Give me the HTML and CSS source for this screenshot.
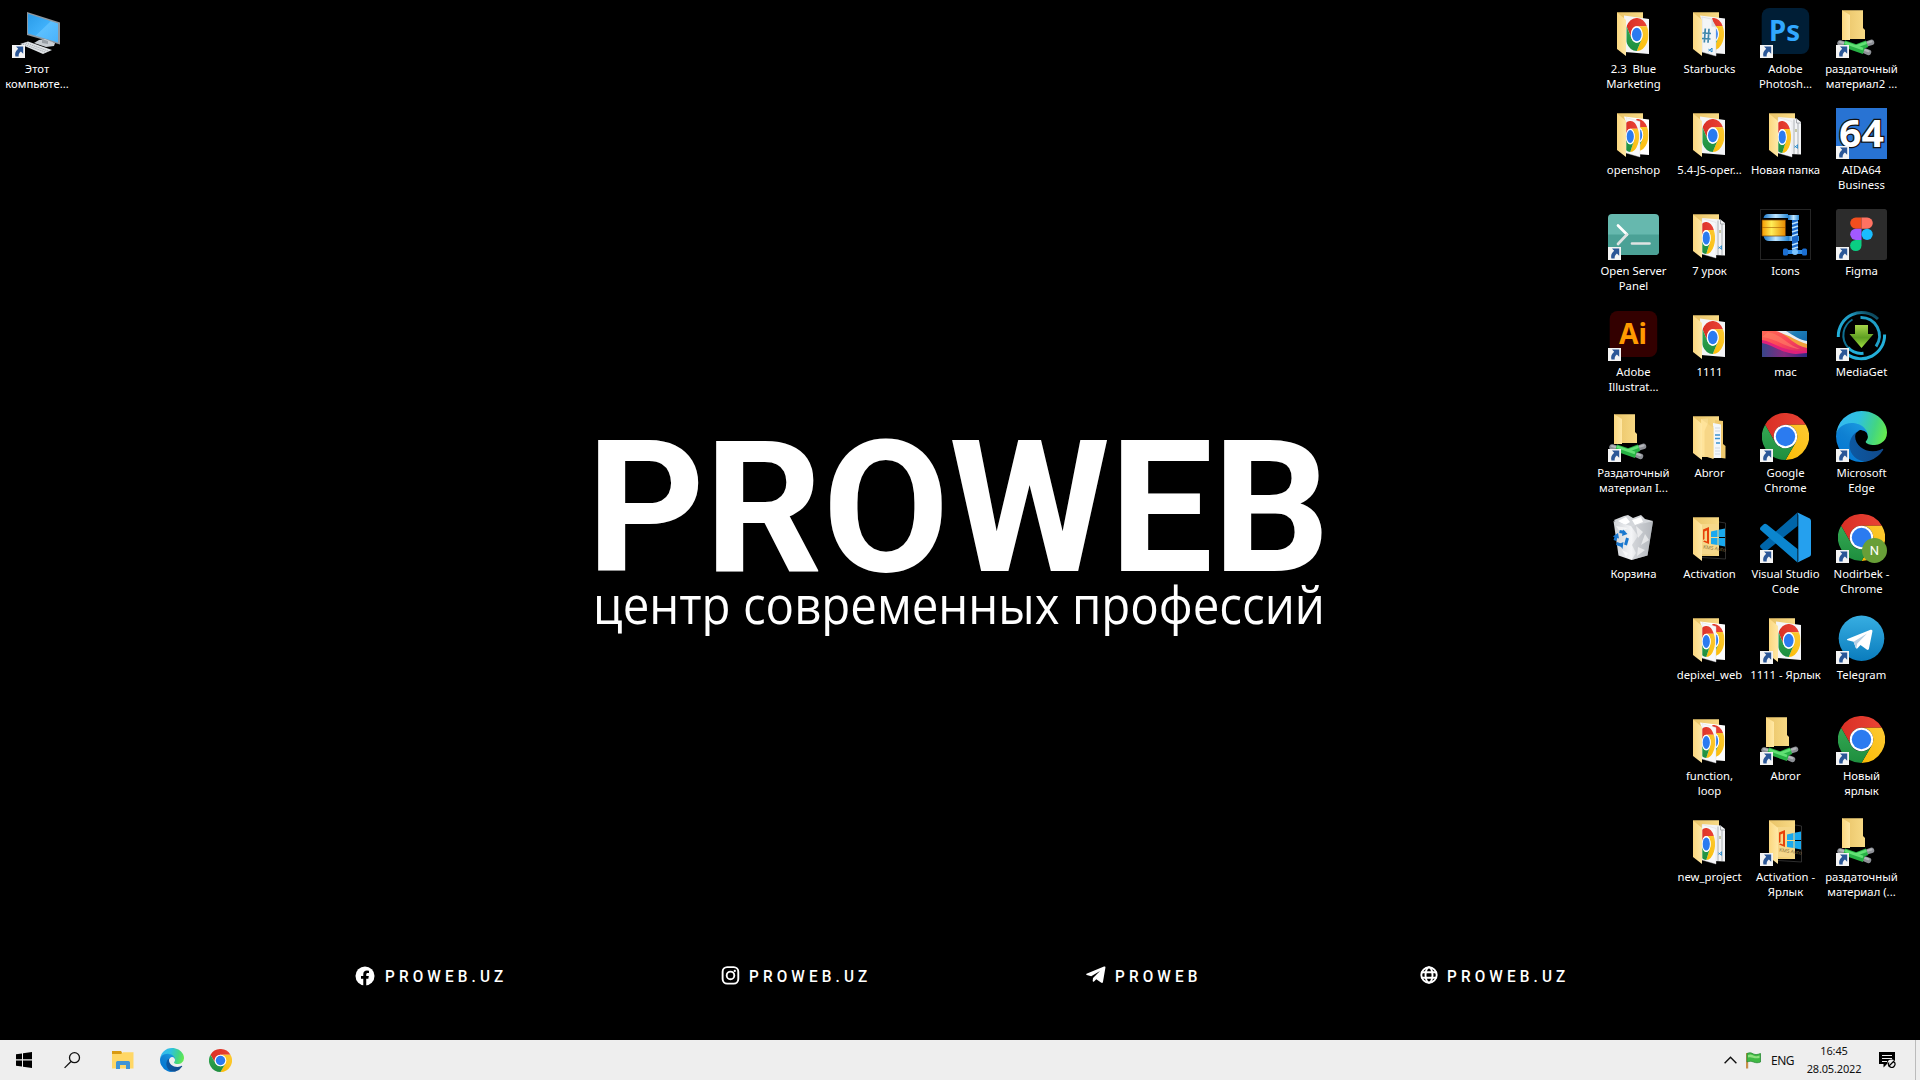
FILE: index.html
```html
<!DOCTYPE html>
<html lang="ru">
<head>
<meta charset="utf-8">
<title>PROWEB</title>
<link rel="stylesheet" href="styles.css">
</head>
<body>
<svg class="defs" width="0" height="0">
  <defs>
    <linearGradient id="fBack" x1="0" y1="0" x2="1" y2="0"><stop offset="0" stop-color="#e9c367"/><stop offset="1" stop-color="#f8da86"/></linearGradient>
    <linearGradient id="fFlap" x1="0" y1="0" x2="1" y2="0"><stop offset="0" stop-color="#fbd77f"/><stop offset="1" stop-color="#ffe8a6"/></linearGradient>
    <linearGradient id="cRed" x1="0" y1="0" x2="1" y2="0"><stop offset="0" stop-color="#d93025"/><stop offset="1" stop-color="#ea4335"/></linearGradient>
    <linearGradient id="cGreen" x1="0" y1="0" x2="0" y2="1"><stop offset="0" stop-color="#34a853"/><stop offset="1" stop-color="#1e8e3e"/></linearGradient>
    <linearGradient id="cYellow" x1="0" y1="1" x2="1" y2="0"><stop offset="0" stop-color="#fbbc04"/><stop offset="1" stop-color="#fcc934"/></linearGradient>
    <linearGradient id="e1" x1="0" y1="0" x2="1" y2="0"><stop offset="0" stop-color="#0c59a4"/><stop offset="1" stop-color="#114a8b"/></linearGradient>
    <linearGradient id="e2" x1=".8" y1="0" x2=".2" y2="1"><stop offset="0" stop-color="#1b9de2"/><stop offset=".5" stop-color="#0f80d2"/><stop offset="1" stop-color="#0078d4"/></linearGradient>
    <linearGradient id="e3" x1="0" y1=".4" x2="1" y2=".6"><stop offset="0" stop-color="#35b8f1"/><stop offset=".4" stop-color="#2fc2df"/><stop offset=".75" stop-color="#43d582"/><stop offset="1" stop-color="#66eb4e"/></linearGradient>
    <linearGradient id="tg" x1="0" y1="0" x2="0" y2="1"><stop offset="0" stop-color="#37aee2"/><stop offset="1" stop-color="#0a7cbd"/></linearGradient>
    <linearGradient id="mgArrow" x1="0" y1="0" x2="0" y2="1"><stop offset="0" stop-color="#a6d54a"/><stop offset=".55" stop-color="#5f9f22"/><stop offset="1" stop-color="#a0e040"/></linearGradient>
    <linearGradient id="mgRing" x1="0" y1="1" x2="1" y2="0"><stop offset="0" stop-color="#23b5e0"/><stop offset=".6" stop-color="#1f9ac2"/><stop offset="1" stop-color="#062c3a"/></linearGradient>
    <linearGradient id="screen" x1="0" y1="0" x2="1" y2="1"><stop offset="0" stop-color="#2a9be8"/><stop offset=".5" stop-color="#3fb0fa"/><stop offset=".52" stop-color="#5cc0ff"/><stop offset="1" stop-color="#49b2fb"/></linearGradient>
    <linearGradient id="gold" x1="0" y1="0" x2="1" y2="0"><stop offset="0" stop-color="#f59a00"/><stop offset=".4" stop-color="#ffee58"/><stop offset="1" stop-color="#e88a00"/></linearGradient>
    <linearGradient id="steel" x1="0" y1="0" x2="1" y2="0"><stop offset="0" stop-color="#1d78c8"/><stop offset=".5" stop-color="#bfe6ff"/><stop offset="1" stop-color="#2b8ad6"/></linearGradient>
    <linearGradient id="bin" x1="0" y1="0" x2="1" y2="0"><stop offset="0" stop-color="#cfd2d6"/><stop offset=".45" stop-color="#f4f5f7"/><stop offset="1" stop-color="#a9adb2"/></linearGradient>
    <linearGradient id="sky" x1="0" y1="0" x2="1" y2="1"><stop offset="0" stop-color="#f9b9a8"/><stop offset=".4" stop-color="#1d7fb8"/><stop offset="1" stop-color="#0a4f9a"/></linearGradient>
    <linearGradient id="wave" x1="0" y1="0" x2="1" y2="1"><stop offset="0" stop-color="#ff6a55"/><stop offset=".5" stop-color="#fa4658"/><stop offset="1" stop-color="#d8246c"/></linearGradient>
    <linearGradient id="wave2" x1="0" y1="0" x2="1" y2="0"><stop offset="0" stop-color="#37458a"/><stop offset=".5" stop-color="#8a2a80"/><stop offset="1" stop-color="#2a2a80"/></linearGradient>
    <clipPath id="cpSingle"><path d="M18.5 9 41 12V47L18.5 44z"/></clipPath>
    <clipPath id="cpFront"><path d="M18.3 9 32 13V49L18.3 45z"/></clipPath>
    <clipPath id="cpBack"><path d="M28 9 41 12V47L32 46z"/></clipPath>
    <clipPath id="cpMac"><path d="M2 21h45v26H2z"/></clipPath>
  </defs>

  <symbol id="chrome" viewBox="0 0 48 48" preserveAspectRatio="none">
    <path fill="url(#cRed)" d="M24 12H44.8A24 24 0 0 0 3.2 12L13.6 30A12 12 0 0 1 24 12z"/>
    <path fill="url(#cYellow)" d="M34.4 30 24 48A24 24 0 0 0 44.8 12H24A12 12 0 0 1 34.4 30z"/>
    <path fill="url(#cGreen)" d="M13.6 30 3.2 12A24 24 0 0 0 24 48L34.4 30A12 12 0 0 1 13.6 30z"/>
    <circle cx="24" cy="24" r="12" fill="#fff"/><circle cx="24" cy="24" r="9.9" fill="#2b7bf0"/>
  </symbol>
  <symbol id="edge" viewBox="0 0 256 256">
    <g transform="translate(-4.6 -4.9)"><path fill="url(#e1)" d="M235.68 195.46a93.73 93.73 0 0 1-10.54 4.71 101.87 101.87 0 0 1-35.9 6.46c-47.32 0-88.54-32.55-88.54-74.32A31.48 31.48 0 0 1 117.13 105c-42.8 1.8-53.8 46.4-53.8 72.53 0 73.88 68.09 81.37 82.76 81.37 7.91 0 19.84-2.3 27-4.56l1.31-.44a128.34 128.34 0 0 0 66.6-52.8 4 4 0 0 0-5.32-5.64z"/></g>
    <path fill="url(#e2)" d="M105.73 241.42A79.2 79.2 0 0 1 83 220.08a80.72 80.72 0 0 1 29.49-120c3.17-1.5 8.41-4.3 15.53-4.08a32.37 32.37 0 0 1 25.69 13 31.88 31.88 0 0 1 6.36 18.66c0-.21 24.46-79.6-80-79.6-43.9 0-80 41.66-80 78.21a130.15 130.15 0 0 0 12.11 56 128 128 0 0 0 156.38 67.11 75.55 75.55 0 0 1-62.78-8z"/>
    <path fill="url(#e3)" d="M152.33 148.86c-.81 1.05-3.3 2.5-3.3 5.66 0 2.61 1.7 5.12 4.72 7.23 14.38 10 41.49 8.68 41.56 8.68a59.56 59.56 0 0 0 30.27-8.35A61.38 61.38 0 0 0 256 109.2c.26-22.41-8-37.31-11.34-43.91C223.46 23.84 177.72 0 128 0A128 128 0 0 0 0 126.2c.48-36.54 36.8-66.05 80-66.05 3.5 0 23.46.34 42 10.07 16.34 8.58 24.9 18.94 30.85 29.21 6.18 10.67 7.28 24.15 7.28 29.52s-2.74 13.33-7.8 19.91z"/>
  </symbol>
  <symbol id="arrow" viewBox="0 0 51 51">
    <path fill="#f4f4f4" d="M0 38h13v13H0z"/>
    <path fill="#2b5797" d="M4 39.6h7.2v7.2L8.9 44.6C7.2 46 6.4 47.6 6.7 49.6H3.4C2.6 46.4 3.6 43.9 6.2 41.8z"/>
  </symbol>
  <symbol id="fback" viewBox="0 0 51 51"><path fill="url(#fBack)" d="M9 5.3h26V44H12z"/></symbol>
  <symbol id="flap" viewBox="0 0 51 51"><path fill="url(#fFlap)" d="M9 5.5 18 13V49L9 42z"/></symbol>
  <symbol id="f-one" viewBox="0 0 51 51">
    <use href="#fback"/><path fill="#f4f5f7" d="M16 8.5 41 12V47L17 45z"/>
    <g clip-path="url(#cpSingle)"><use href="#chrome" x="17" y="11" width="23.5" height="33"/></g>
    <use href="#flap"/>
  </symbol>
  <symbol id="f-two" viewBox="0 0 51 51">
    <use href="#fback"/><path fill="#fff" d="M16 8.5 41 11.5V47L28 46z"/>
    <g clip-path="url(#cpBack)"><use href="#chrome" x="19" y="11" width="21.5" height="32"/></g>
    <path fill="#f7f8fa" stroke="#d5d5d8" stroke-width=".4" d="M18 9.5 32 13.5V49L18 45z"/>
    <g clip-path="url(#cpFront)"><use href="#chrome" x="13.5" y="13" width="17.5" height="31"/></g>
    <use href="#flap"/>
  </symbol>
  <symbol id="vs" viewBox="0 0 10 10"><path fill="none" stroke="#1c86cc" stroke-width="2" d="M8 1v8L1 3.5M1 7 8 1.5"/></symbol>
  <symbol id="f-docs" viewBox="0 0 51 51">
    <use href="#fback"/><path fill="#f3f4f6" d="M18 9 36.5 10.5 41 14V46.5L30 46z"/>
    <path fill="none" stroke="#8e9298" stroke-width=".7" d="M34 11.5V46M36.5 10.5V15L41 15M38 15V46"/>
    <use href="#vs" x="34" y="35" width="4.5" height="7"/><path stroke="#9a9a52" stroke-width="1" d="M36 21v3"/>
    <path fill="#f7f8fa" stroke="#d5d5d8" stroke-width=".4" d="M18 9.5 32 13.5V49L18 45z"/>
    <g clip-path="url(#cpFront)"><use href="#chrome" x="13.5" y="13" width="17.5" height="32"/></g>
    <use href="#flap"/>
  </symbol>
  <symbol id="f-hash" viewBox="0 0 51 51">
    <use href="#fback"/><path fill="#f4f5f7" d="M16 8.5 41 11.5V47L28 46z"/>
    <g clip-path="url(#cpBack)"><use href="#chrome" x="19" y="11" width="21" height="32"/></g>
    <path fill="#f3f5f7" stroke="#c9ccd0" stroke-width=".5" d="M18 10 27.5 12 32 20V49L18 45z"/>
    <path fill="#d9dde2" d="M27.500 12V19.500L32 20z"/>
    <path fill="none" stroke="#3f87ab" stroke-width="1.7" d="M21.3 21.5 20.3 35.5M25 21.8 24 35.800M18.5 26 27 26.5M18 31.5 26.5 32"/>
    <use href="#vs" x="24" y="39" width="5" height="8"/>
    <use href="#flap"/>
  </symbol>
  <symbol id="f-stack" viewBox="0 0 51 51">
    <use href="#fback"/>
    <path fill="#efc96e" d="M31 9 39 10V33L41.5 35V47.5L30 46z"/>
    <path fill="#f3f7fb" d="M29 12 37 13.5V47H29z"/>
    <path fill="none" stroke="#b9c6d4" stroke-width=".6" d="M31 17h5M31 20h5M31 37h5M31 40h5M31 43h5"/>
    <path stroke="#3b93d0" stroke-width="1.4" d="M31 24h5M31 27.5h5M32 32h4"/>
    <path fill="#f6d98c" d="M17 8 24 7.5V46L18 46z"/><path fill="#ffe39a" d="M17 8 29.500 17V48L18 44z"/><path fill="#f3d07c" d="M24 12 29.500 15V47.5L20.5 45.5V20z" opacity=".65"/>
    <use href="#flap"/>
  </symbol>
  <symbol id="f-act" viewBox="0 0 51 51">
    <use href="#fback"/>
    <path fill="none" stroke="#3a3a3a" stroke-width=".8" d="M35 10 41.5 11V47L18 45.5"/>
    <path fill="#f6d88a" d="M17 12h18V38L28.500 42H17z"/>
    <path fill="#e8420a" d="M19 17.5 25 15V32L19 29.5 20.5 28.5 23 29.5V18.5L20.5 19.5V27L19 28z"/>
    <path fill="#19a9ee" d="M27 19.5 33.500 18V25H27zM34.500 17.800 41 16.500V25H34.500zM27 26H33.500V33L27 32zM34.500 26H41V34.500L34.500 33.300z"/>
    <use href="#flap"/>
  </symbol>
  <symbol id="f-net" viewBox="0 0 51 51">
    <path fill="url(#fBack)" d="M6 3.3H27V21L29 23V32H12z"/>
    <path fill="url(#fFlap)" d="M6 3.3 14 8V33H6z"/>
    <path stroke="#8d9096" stroke-width="5.5" stroke-linecap="round" d="M4 36 9 37.5M32 36.5 35.5 35.3M29 44 32.5 45.3"/>
    <path stroke="#b4b6ba" stroke-width="2" stroke-linecap="round" d="M4 35 9 36.5M32 35.5 35.5 34.5M29 43 32.5 44.2"/>
    <path stroke="#28b245" stroke-width="7" d="M8 36.8 28 43.600M20 41 31 36.700"/>
    <path stroke="#62e175" stroke-width="2.6" d="M9 35.8 27 42M20 39.5 30.5 35.8"/>
  </symbol>
  <symbol id="pc" viewBox="0 0 51 51">
    <path fill="#8e979f" d="M15 5 48 15.5V37.5L15 28z"/><path fill="url(#screen)" d="M16 6.7 46 16.5V35.5L16 26.5z"/>
    <path fill="#c9ced3" d="M27 33 33 32 43 36 42 39 34 40 22 36z"/><path fill="#9aa0a6" d="M30 32 36 34V37L30 36z"/>
    <path fill="#dfe3e6" d="M8 37 16 34.5 40 43 31 47z"/><path fill="none" stroke="#8b9197" stroke-width=".8" stroke-dasharray="1.2 1" d="M11 37 33 45M14 36 36 44"/>
  </symbol>
  <symbol id="osp" viewBox="0 0 51 51">
    <rect y="5" width="51" height="41" rx="4" fill="#66b8ae"/><path fill="#4ba196" d="M0 25.5H51V42a4 4 0 0 1-4 4H4a4 4 0 0 1-4-4z"/>
    <path fill="none" stroke="#fff" stroke-width="2.7" stroke-linecap="round" d="M10 16.5 19 25.5"/><path fill="none" stroke="#dfe3e3" stroke-width="2.7" stroke-linecap="round" d="M19 25.5 10 35M24 34.5H41.5"/>
  </symbol>
  <symbol id="zip" viewBox="0 0 51 51">
    <rect x=".5" y=".5" width="50" height="50" fill="#000" stroke="#242424"/>
    <path fill="url(#steel)" d="M8 5H28V9H3.5C4 6.5 5.5 5 8 5zM3.5 27H28V32H9C6 32 4 30 3.5 27z"/>
    <path fill="url(#steel)" d="M28 6h11v5H28zM28 27h11v5H28z"/>
    <path fill="#1a66c8" d="M32 11h6V43h-6z"/><path stroke="#b9e2ff" stroke-width="1.5" d="M32 15l6-2M32 19l6-2M32 23l6-2M32 27l6-2M32 36l6-2M32 40l6-2"/>
    <path fill="url(#gold)" stroke="#7a3e00" stroke-width=".7" d="M2 11H25.500V27H2z"/><path stroke="#a55b00" stroke-width=".6" d="M2 18.5H25"/>
    <path fill="#2f8be6" d="M26 41h18v4H26z"/><rect x="23" y="39.5" width="5" height="7" rx="1.5" fill="#1c6fd2"/><rect x="42" y="39.5" width="5" height="7" rx="1.5" fill="#1c6fd2"/><circle cx="35" cy="43" r="3" fill="#7cc4ff"/>
  </symbol>
  <symbol id="figma" viewBox="0 0 51 51"><rect width="51" height="51" rx="2.5" fill="#2c2c2c"/>
    <path fill="#f24e1e" d="M25.5 8.500h-5.700a5.600 5.600 0 0 0 0 11.200h5.700z"/><path fill="#ff7262" d="M25.500 8.500h5.700a5.600 5.600 0 0 1 0 11.200h-5.700z"/>
    <path fill="#a259ff" d="M25.500 19.700h-5.700a5.600 5.600 0 0 0 0 11.200h5.700z"/><circle cx="31.100" cy="25.300" r="5.600" fill="#1abcfe"/>
    <path fill="#0acf83" d="M19.800 30.900h5.700v5.600a5.700 5.600 0 1 1-5.700-5.600z"/>
  </symbol>
  <symbol id="mac" viewBox="0 0 51 51"><g clip-path="url(#cpMac)">
    <path fill="url(#sky)" d="M2 21h45v26H2z"/><path fill="#e9eef5" d="M13 21 26 21C34 26 40 30 47 31V35C34 34 24 26 13 21z"/>
    <path fill="#f2a03c" d="M20 23C30 25 36 31 47 34V39L36 37z"/>
    <path fill="url(#wave)" d="M2 21H16C28 24 33 36 47 38V44L2 40z"/><path fill="#ff8266" d="M8 22C22 25 26 34 40 39 26 38 20 30 2 27z" opacity=".6"/>
    <path fill="#e0207a" d="M2 30C14 32 22 42 47 41V47H2z"/><path fill="url(#wave2)" d="M2 33C14 35 20 43 36 44L47 43V47H2z"/>
  </g></symbol>
  <symbol id="mget" viewBox="0 0 51 51"><g fill="none" stroke-width="3">
    <path stroke="url(#mgRing)" d="M2.3 27A23.5 23.5 0 0 1 42 9"/><path stroke="#23b0da" d="M48.6 24.5A23.5 23.5 0 0 1 11 44"/>
    <path stroke="#1f9fc8" d="M24.5 7.5A18.3 18.3 0 0 1 40 36.5"/><path stroke="#0f6f90" stroke-width="2" d="M16.5 9.5A18.3 18.3 0 0 0 12 37.5"/><path stroke="#23b0da" d="M12 37.5A18.3 18.3 0 0 0 27.5 43.3"/></g>
    <path fill="url(#mgArrow)" d="M19 15H32V24H37.5L25.5 38 13.5 24H19z"/>
  </symbol>
  <symbol id="gchrome" viewBox="0 0 51 51"><use href="#chrome" x="2" y="2" width="47" height="47"/></symbol>
  <symbol id="gedge" viewBox="0 0 51 51"><use href="#edge" width="51" height="51"/></symbol>
  <symbol id="vscode" viewBox="0 0 51 51">
    <path fill="#0065a9" d="M37.5 .5V14L7 38.5C5.5 39.7 4.5 39.5 3.5 38.5L.8 36C-.3 35-.2 33.6 .8 32.7z"/>
    <path fill="#0b86cf" d="M37.5 50.5V37L7 12.5C5.5 11.4 4.5 11.5 3.5 12.5L.8 15C-.3 16-.2 17.4 .8 18.3z"/>
    <path fill="#25a0ee" d="M37.5 .5 49.3 6.2C50.5 6.8 51 7.7 51 9V42C51 43.3 50.500 44.200 49.300 44.800L37.500 50.500C38.500 49.500 38.300 48 38.300 48V3z"/>
  </symbol>
  <symbol id="trash" viewBox="0 0 51 51">
    <path fill="#d4d7db" d="M6 8 16 4 20 3 25 6 33 3 37 7 45 9 41 14H10z"/><path fill="#fff" d="M10 9 18 5 22 10 17 13zM24 8 33 5 35 10 27 13z"/>
    <path fill="url(#bin)" d="M5.5 9 23 14 45 9.5 39.5 43.5 23.5 48 10.5 43.5z"/>
    <path fill="#bcc0c5" d="M23 14 30 24 24 33 28 41 23.5 48 39.5 43.5 45 9.5z" opacity=".55"/><path fill="#fff" d="M28 14 35 20 30 26zM37 22 41 28 33 33zM30 35 37 38 29 44zM8 14 20 16 12 20zM14 38 20 41 18 45z" opacity=".6"/>
    <path fill="none" stroke="#1a78cf" stroke-width="3" d="M7 28.500 8.500 23.500M11.500 19.500 17 20.500M19.500 26 17.500 33M14 33.500 8.500 31.500"/><path fill="#1a78cf" d="M15 17.500 19.500 22 14 24zM4.800 24.500 10 21 11 26.500zM15.500 30 14.500 37 11 32z"/>
  </symbol>
  <symbol id="tgram" viewBox="0 0 51 51"><circle cx="25.5" cy="25.3" r="22.8" fill="url(#tg)"/><path fill="#fff" d="M11.5 26 34.5 16.8C36 16.3 36.7 17 36.4 18.5L33 35.5C32.7 37 31.8 37.2 30.7 36.5L24.5 32 21.5 35.3C21 35.9 20 35.6 19.7 34.7L17.6 28.8 11.6 27.2C10.8 26.9 10.800 26.400 11.500 26z"/><path fill="#b5cfe4" d="M17.600 28.800 31 20.500 21.300 30.500 20.300 35.600z"/></symbol>
</svg>

<main class="desktop">
  <section class="wallpaper">
    <svg class="logo" viewBox="0 0 726 200">
      <text class="brand" y="131" x="-11.4 106.6 224.4 351 511.6 614.6">PROWEB</text>
      <text class="slogan" x="-5" y="183.500" textLength="732" lengthAdjust="spacingAndGlyphs">центр современных профессий</text>
    </svg>
    <div class="social">
      <div class="link"><svg width="20" height="20" viewBox="0 0 20 21"><circle cx="10" cy="10.5" r="10" fill="#fff"/><path fill="#000" d="M8.200 21V13.300H5.800V10.400H8.200V8.600C8.200 6 9.700 4.700 12 4.700L14.200 4.900V7.400H12.900C11.700 7.400 11.300 8.100 11.300 9V10.400H14L13.500 13.300H11.300V21z"/></svg><span>PROWEB.UZ</span></div>
      <div class="link ig"><svg width="19" height="19" viewBox="0 0 19 20"><g fill="none" stroke="#fff" stroke-width="2"><rect x="1.200" y="1.200" width="16.500" height="17.300" rx="4.800"/><circle cx="9.500" cy="9.900" r="4"/></g><circle cx="14" cy="5.200" r="1.200" fill="#fff"/></svg><span>PROWEB.UZ</span></div>
      <div class="link tg"><svg width="20" height="18" viewBox="0 0 20 18"><path fill="#fff" d="M.5 7.800 18 .6C19 .2 19.600 .8 19.400 1.800L17 15.800C16.800 17 16 17.300 15 16.600L10.300 13.200 8 15.500C7.500 16 6.800 15.800 6.700 15L7 12 14 5 5.200 10.200 .7 8.900C0 8.600 0 8 .5 7.800z"/></svg><span>PROWEB</span></div>
      <div class="link web"><svg width="18" height="18" viewBox="0 0 18 18"><g fill="none" stroke="#fff" stroke-width="1.900"><circle cx="9" cy="9" r="7.700"/><ellipse cx="9" cy="9" rx="3.500" ry="7.700"/><path d="M1.500 6.300h15M1.500 11.700h15"/></g></svg><span>PROWEB.UZ</span></div>
    </div>
  </section>

  <section class="icons">
    <div class="col first">
      <div class="item"><svg><use href="#pc"/><use href="#arrow"/></svg><p>Этот<br>компьюте...</p></div>
    </div>
    <div class="cols">
      <div class="col">
        <div class="item"><svg><use href="#f-one"/></svg><p>2.3&nbsp; Blue<br>Marketing</p></div>
        <div class="item"><svg><use href="#f-two"/></svg><p>openshop</p></div>
        <div class="item"><svg><use href="#osp"/><use href="#arrow"/></svg><p>Open Server<br>Panel</p></div>
        <div class="item"><svg viewBox="0 0 51 51"><rect x="1.700" y="1" width="47.500" height="46" rx="8" fill="#330000"/><text class="adobe" fill="#ff9a00" x="11" y="34" textLength="28" lengthAdjust="spacingAndGlyphs">Ai</text><use href="#arrow"/></svg><p>Adobe<br>Illustrat...</p></div>
        <div class="item"><svg><use href="#f-net"/><use href="#arrow"/></svg><p>Раздаточный<br>материал I...</p></div>
        <div class="item"><svg><use href="#trash"/></svg><p>Корзина</p></div>
      </div>
      <div class="col">
        <div class="item"><svg><use href="#f-hash"/></svg><p>Starbucks</p></div>
        <div class="item"><svg><use href="#f-one"/></svg><p>5.4-JS-oper...</p></div>
        <div class="item"><svg><use href="#f-docs"/></svg><p>7 урок</p></div>
        <div class="item"><svg><use href="#f-one"/></svg><p>1111</p></div>
        <div class="item"><svg><use href="#f-stack"/></svg><p>Abror</p></div>
        <div class="item"><svg viewBox="0 0 51 51"><use href="#f-act"/><text class="kms" x="19" y="36.500" transform="rotate(8 19 36)">KMS Auto</text></svg><p>Activation</p></div>
        <div class="item"><svg><use href="#f-two"/></svg><p>depixel_web</p></div>
        <div class="item"><svg><use href="#f-two"/></svg><p>function,<br>loop</p></div>
        <div class="item"><svg><use href="#f-docs"/></svg><p>new_project</p></div>
      </div>
      <div class="col">
        <div class="item"><svg viewBox="0 0 51 51"><rect x="1.700" y="1" width="47.500" height="46" rx="8" fill="#001e36"/><text class="adobe" fill="#31a8ff" x="9" y="34" textLength="31" lengthAdjust="spacingAndGlyphs">Ps</text><use href="#arrow"/></svg><p>Adobe<br>Photosh...</p></div>
        <div class="item"><svg><use href="#f-docs"/></svg><p>Новая папка</p></div>
        <div class="item"><svg><use href="#zip"/></svg><p>Icons</p></div>
        <div class="item"><svg><use href="#mac"/></svg><p>mac</p></div>
        <div class="item"><svg><use href="#gchrome"/><use href="#arrow"/></svg><p>Google<br>Chrome</p></div>
        <div class="item"><svg><use href="#vscode"/><use href="#arrow"/></svg><p>Visual Studio<br>Code</p></div>
        <div class="item"><svg><use href="#f-one"/><use href="#arrow"/></svg><p>1111 - Ярлык</p></div>
        <div class="item"><svg><use href="#f-net"/><use href="#arrow"/></svg><p>Abror</p></div>
        <div class="item"><svg viewBox="0 0 51 51"><use href="#f-act"/><text class="kms" x="19" y="36.500" transform="rotate(8 19 36)">KMS Auto</text><use href="#arrow"/></svg><p>Activation -<br>Ярлык</p></div>
      </div>
      <div class="col">
        <div class="item"><svg><use href="#f-net"/><use href="#arrow"/></svg><p>раздаточный<br>материал2 ...</p></div>
        <div class="item"><svg viewBox="0 0 51 51"><path fill="#2873d3" d="M0 0h51v51H0z"/><text class="aida" x="3" y="38.500" textLength="45" lengthAdjust="spacingAndGlyphs">64</text><use href="#arrow"/></svg><p>AIDA64<br>Business</p></div>
        <div class="item"><svg><use href="#figma"/><use href="#arrow"/></svg><p>Figma</p></div>
        <div class="item"><svg><use href="#mget"/><use href="#arrow"/></svg><p>MediaGet</p></div>
        <div class="item"><svg><use href="#gedge"/><use href="#arrow"/></svg><p>Microsoft<br>Edge</p></div>
        <div class="item"><svg viewBox="0 0 51 51"><use href="#gchrome"/><circle cx="38.500" cy="38.500" r="12.500" fill="#689f38"/><text class="avatar" x="38.500" y="43">N</text><use href="#arrow"/></svg><p>Nodirbek -<br>Chrome</p></div>
        <div class="item"><svg><use href="#tgram"/><use href="#arrow"/></svg><p>Telegram</p></div>
        <div class="item"><svg><use href="#gchrome"/><use href="#arrow"/></svg><p>Новый<br>ярлык</p></div>
        <div class="item"><svg><use href="#f-net"/><use href="#arrow"/></svg><p>раздаточный<br>материал (...</p></div>
      </div>
    </div>
  </section>
</main>

<footer class="taskbar">
  <div class="apps">
    <svg class="start" width="16" height="16" viewBox="0 0 16 16"><path d="M0 2.200 6 1.400V7.300H0zM7 1.200 16 0V7.300H7zM0 8.500H6V14.500L0 13.700zM7 8.500H16V16L7 14.800z"/></svg>
    <svg class="search" width="17" height="17" viewBox="0 0 17 17"><g fill="none" stroke="#111" stroke-width="1.300"><circle cx="10.500" cy="5.700" r="5"/><path d="M7 9.500.6 15.900"/></g></svg>
    <svg class="explorer" width="22" height="19" viewBox="0 0 22 19"><path fill="#d99a12" d="M0 0H9L10 1.500V4H0z"/><path fill="#ffd766" d="M0 3H9L11 1.200H21.500V17.500H0z"/><path fill="#3f94d6" d="M4 18V11.500Q4 10 5.500 10H16.500Q18 10 18 11.500V18H14V14H8V18z"/></svg>
    <svg class="edge" width="24" height="24"><use href="#edge" width="24" height="24"/></svg>
    <svg class="chrome" width="23" height="23"><use href="#chrome" width="23" height="23"/></svg>
  </div>
  <div class="tray">
    <svg class="caret" width="13" height="8" viewBox="0 0 13 8"><path fill="none" stroke="#111" stroke-width="1.400" d="M.6 7.300 6.500 1.300 12.400 7.300"/></svg>
    <svg class="flag" width="17" height="17" viewBox="0 0 17 17"><path fill="#c98f4a" d="M1 1h2.200v15.500H1z"/><path fill="#3fb944" stroke="#2a8b35" stroke-width=".8" d="M2 1.500C5 .2 6.500 1 8.500 2 10.500 3 13 2.500 15.500 1.500V10C13 11 11 11 8.500 10 6 9 4.500 9 2 10z"/><path fill="#8fe07f" d="M3 3C5 2 6.500 2.500 8.500 3.500 10.500 4.500 12.500 4.200 14.500 3.500V6C12 6.500 10 6.500 8 5.700 6 5 4.500 5 3 5.500z"/></svg>
    <span class="lang">ENG</span>
    <div class="clock"><span>16:45</span><span>28.05.2022</span></div>
    <svg class="note" width="17" height="16" viewBox="0 0 17 16"><path d="M0 0H16V8.500L13 12H8L4.500 15.500V12H0z"/><path stroke="#eee" stroke-width="1" d="M3 3.500H13M3 6.500H13M3 9.500H8"/><circle cx="12.500" cy="11.500" r="4" fill="#eee"/><path fill="none" stroke="#000" stroke-width="1.200" d="M9.500 14.500 15.500 8.500M10 10.500A3.200 3.200 0 1 0 14.500 9.500"/></svg>
    <i class="peek"></i>
  </div>
</footer>
</body>
</html>
```
FILE: styles.css
```css
* { box-sizing: border-box; }

body {
  margin: 0;
  height: 1080px;
  overflow: hidden;
  display: flex;
  flex-direction: column;
  background: #000;
  font-family: "Noto Sans", "Open Sans", sans-serif;
}

.defs { position: absolute; }

/* Wallpaper and icon layer share one grid cell */
.desktop {
  display: grid;
  height: 1040px;
  color: #fff;
}
.wallpaper, .icons { grid-area: 1 / 1; }

.logo {
  display: block;
  width: 726px;
  height: 200px;
  margin: 440px 0 0 598px;
  overflow: visible;
  fill: #fff;
}
.brand { font: bold 184px Roboto, sans-serif; }
.slogan { font: 400 50.5px "Open Sans", sans-serif; }

.social {
  display: grid;
  grid-template-columns: 366px 365px 334px auto;
  margin: 326px 0 0 355px;
  height: 20px;
}
.link { display: flex; align-items: flex-start; }
.link span {
  width: 0;
  margin-left: 10px;
  font: 500 17px/20px Roboto, sans-serif;
  letter-spacing: 4.6px;
  white-space: nowrap;
  transform: scaleX(.9);
  transform-origin: 0 0;
}
.link.ig span { margin-left: 9px; }
.link.tg span { margin-left: 9px; }
.link.web span { margin-left: 9px; }

.icons {
  display: flex;
  justify-content: space-between;
  padding: 7px 20.5px 0 0;
}
.cols { display: flex; }
.col { width: 76px; }
.col.first { margin-left: -1px; }
.item {
  height: 101px;
  display: flex;
  flex-direction: column;
  align-items: center;
}
.item > svg { width: 51px; height: 51px; flex: none; overflow: visible; }
.item p {
  margin: 3px 0 0;
  font-size: 11.3px;
  line-height: 15px;
  text-align: center;
  white-space: nowrap;
}

.adobe { font: bold 29px "Noto Sans", sans-serif; }
.aida { font: bold 38px "Open Sans", sans-serif; fill: #fff; stroke: #111; stroke-width: 2.500px; paint-order: stroke; }
.avatar { font: 13px Roboto, sans-serif; fill: #fff; text-anchor: middle; }
.kms { font: 5px "Noto Sans", sans-serif; fill: #8a7440; }

.taskbar {
  display: flex;
  justify-content: space-between;
  height: 40px;
  background: #eee;
  color: #111;
}
.apps, .tray { display: flex; align-items: center; }
.start { margin-left: 16px; }
.search { margin-left: 32px; }
.explorer { margin-left: 31px; }
.apps .edge { margin-left: 26px; }
.apps .chrome { margin-left: 25px; }
.caret { margin-right: -1px; }
.flag { margin-left: 9px; }
.lang { margin-left: 9px; width: 24px; font-size: 12px; letter-spacing: -.5px; }
.clock {
  display: flex;
  flex-direction: column;
  align-items: center;
  width: 62px;
  margin-left: 8px;
  font-size: 11px;
  line-height: 18px;
  letter-spacing: -.15px;
}
.note { margin-left: 14px; }
.peek { width: 5px; height: 40px; margin-left: 19px; border-left: 1px solid #bbb; }
```
